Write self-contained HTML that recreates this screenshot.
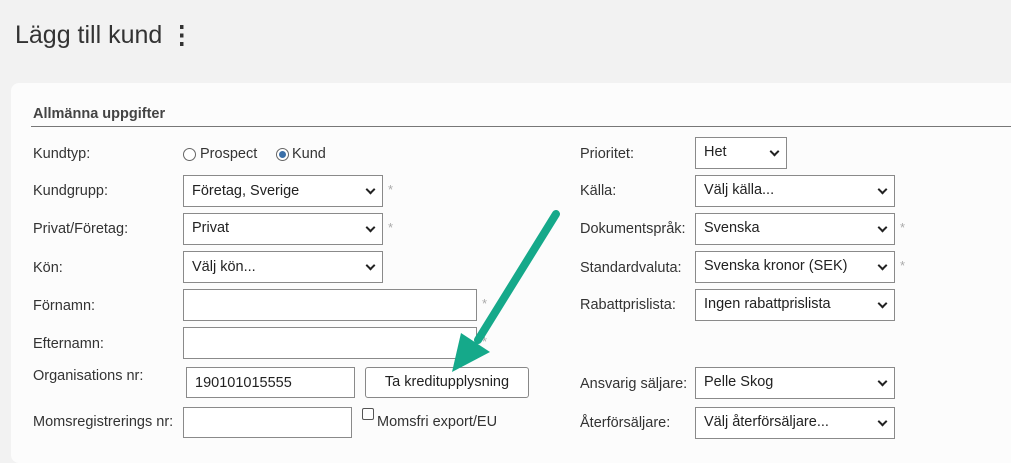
<!DOCTYPE html>
<html><head><meta charset="utf-8"><style>
*{box-sizing:border-box;margin:0;padding:0}
body{width:1011px;height:444px;background:#f2f2f2;font-family:"Liberation Sans",sans-serif;color:#333;position:relative;overflow:hidden;font-size:14.5px}
.a{position:absolute}
.card{left:11px;top:83px;width:1010px;height:380px;background:#fcfcfc;border-radius:8px}
.h1{left:15px;top:20px;font-size:25px;color:#333}
.lbl{position:absolute;font-size:14.5px;color:#333}
.sel,.inp{position:absolute;border:1px solid #8a8a8a;background:#fff;height:32px;font-size:14.5px;padding:7px 8px;color:#222}
.sel::after{content:"";position:absolute;right:8px;top:10px;width:5px;height:5px;border-right:2px solid #222;border-bottom:2px solid #222;transform:rotate(45deg)}
.star{position:absolute;color:#aaa;font-size:13px}
</style></head><body>
<div class="a h1">Lägg till kund <span style="font-weight:bold">⋮</span></div>
<div class="a card"></div>
<div class="a" style="left:33px;top:106px;font-weight:bold;font-size:14.5px;color:#444">Allmänna uppgifter</div>
<div class="a" style="left:31px;top:126px;width:980px;height:1px;background:#777"></div>

<div class="lbl" style="left:33px;top:146px">Kundtyp:</div>
<div class="a" style="left:183px;top:148px;width:13px;height:13px;border:1px solid #666;border-radius:50%;background:#fff"></div>
<div class="lbl" style="left:200px;top:146px">Prospect</div>
<div class="a" style="left:276px;top:148px;width:13px;height:13px;border:1px solid #666;border-radius:50%;background:#fff"><div style="margin:2px;width:7px;height:7px;border-radius:50%;background:#3a6fa8"></div></div>
<div class="lbl" style="left:292px;top:146px">Kund</div>

<div class="lbl" style="left:33px;top:183px">Kundgrupp:</div>
<div class="sel" style="left:183px;top:175px;width:200px">Företag, Sverige</div><div class="star" style="left:388px;top:182px">*</div>
<div class="lbl" style="left:33px;top:221px">Privat/Företag:</div>
<div class="sel" style="left:183px;top:213px;width:200px;padding-top:6px">Privat</div><div class="star" style="left:388px;top:220px">*</div>
<div class="lbl" style="left:33px;top:260px">Kön:</div>
<div class="sel" style="left:183px;top:251px;width:200px">Välj kön...</div>
<div class="lbl" style="left:33px;top:298px">Förnamn:</div>
<div class="inp" style="left:183px;top:289px;width:294px"></div><div class="star" style="left:482px;top:296px">*</div>
<div class="lbl" style="left:33px;top:336px">Efternamn:</div>
<div class="inp" style="left:183px;top:327px;width:294px"></div><div class="star" style="left:482px;top:334px">*</div>
<div class="lbl" style="left:33px;top:368px">Organisations nr:</div>
<div class="inp" style="left:186px;top:367px;width:169px;height:31px">190101015555</div>
<div class="a" style="left:365px;top:367px;width:164px;height:31px;border:1px solid #888;border-radius:3px;background:#fff;text-align:center;line-height:29px;font-size:14.5px;color:#222">Ta kreditupplysning</div>
<div class="lbl" style="left:33px;top:414px">Momsregistrerings nr:</div>
<div class="inp" style="left:183px;top:407px;width:169px;height:31px"></div>
<div class="a" style="left:362px;top:408px;width:12px;height:12px;border:1px solid #555;background:#fff;border-radius:2px"></div>
<div class="lbl" style="left:377px;top:414px">Momsfri export/EU</div>

<div class="lbl" style="left:580px;top:146px">Prioritet:</div>
<div class="sel" style="left:695px;top:137px;width:92px;padding-top:6px">Het</div>
<div class="lbl" style="left:580px;top:183px">Källa:</div>
<div class="sel" style="left:695px;top:175px;width:200px;padding-top:6px">Välj källa...</div>
<div class="lbl" style="left:580px;top:221px">Dokumentspråk:</div>
<div class="sel" style="left:695px;top:213px;width:200px;padding-top:6px">Svenska</div><div class="star" style="left:900px;top:220px">*</div>
<div class="lbl" style="left:580px;top:260px">Standardvaluta:</div>
<div class="sel" style="left:695px;top:251px;width:200px;padding-top:6px">Svenska kronor (SEK)</div><div class="star" style="left:900px;top:258px">*</div>
<div class="lbl" style="left:580px;top:297px">Rabattprislista:</div>
<div class="sel" style="left:695px;top:289px;width:200px;padding-top:6px">Ingen rabattprislista</div>
<div class="lbl" style="left:580px;top:376px">Ansvarig säljare:</div>
<div class="sel" style="left:695px;top:367px;width:200px;padding-top:6px">Pelle Skog</div>
<div class="lbl" style="left:580px;top:415px">Återförsäljare:</div>
<div class="sel" style="left:695px;top:407px;width:200px;padding-top:6px">Välj återförsäljare...</div>

<svg class="a" style="left:0;top:0" width="1011" height="444">
<line x1="556" y1="214" x2="478" y2="340" stroke="#15a98a" stroke-width="8" stroke-linecap="round"/>
<polygon points="452,372 461,333 490,352" fill="#15a98a"/>
</svg>
</body></html>
